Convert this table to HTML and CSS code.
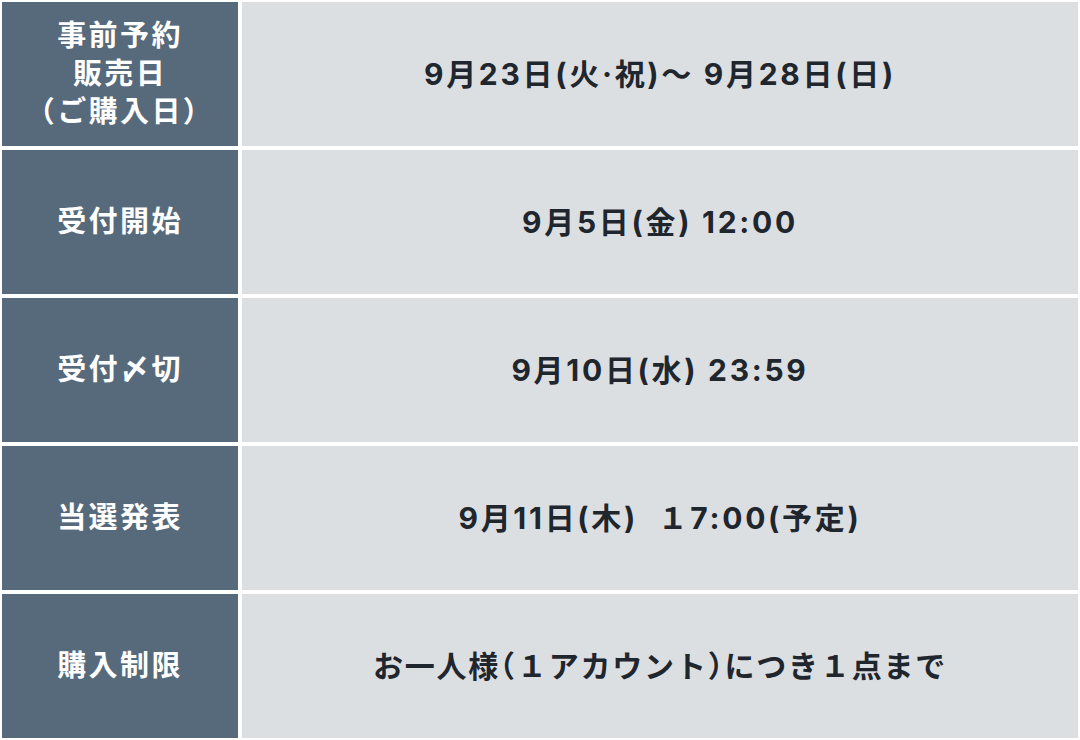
FILE: index.html
```html
<!DOCTYPE html>
<html lang="ja">
<head>
<meta charset="utf-8">
<title>予約スケジュール</title>
<link rel="stylesheet" href="styles.css">
</head>
<body>
<div class="schedule">
  <div class="head">事前予約<br>販売日<br>（ご購入日）</div>
  <div class="value">9月23日(火·祝)〜 9月28日(日)</div>
  <div class="head">受付開始</div>
  <div class="value">9月5日(金) 12:00</div>
  <div class="head">受付〆切</div>
  <div class="value">9月10日(水) 23:59</div>
  <div class="head">当選発表</div>
  <div class="value">9月11日(木)&nbsp; １7:00(予定)</div>
  <div class="head">購入制限</div>
  <div class="value value-kana">お一人様<span class="paren">（</span>１アカウント<span class="paren">）</span>につき１点まで</div>
</div>
</body>
</html>
```
FILE: styles.css
```css
html, body {
  margin: 0;
  padding: 0;
  background: #ffffff;
}
.schedule {
  width: 1080px;
  height: 740px;
  box-sizing: border-box;
  padding: 2px;
  display: grid;
  grid-template-columns: 236px 1fr;
  grid-auto-rows: 144px;
  gap: 4px;
  font-family: Inter, "Noto Sans CJK JP", sans-serif;
  font-weight: 700;
  font-size: 30px;
}
.head {
  background: #566a7c;
  color: #ffffff;
  display: flex;
  align-items: center;
  justify-content: center;
  text-align: center;
  line-height: 38px;
  font-size: 29px;
  letter-spacing: 2.4px;
}
.value {
  background: #dcdfe2;
  color: #1f262d;
  display: flex;
  align-items: center;
  justify-content: center;
  text-align: center;
  letter-spacing: 2.7px;
  padding-bottom: 4px;
}
.value-kana {
  letter-spacing: 1.8px;
}
.paren {
  font-feature-settings: "halt";
}
```
